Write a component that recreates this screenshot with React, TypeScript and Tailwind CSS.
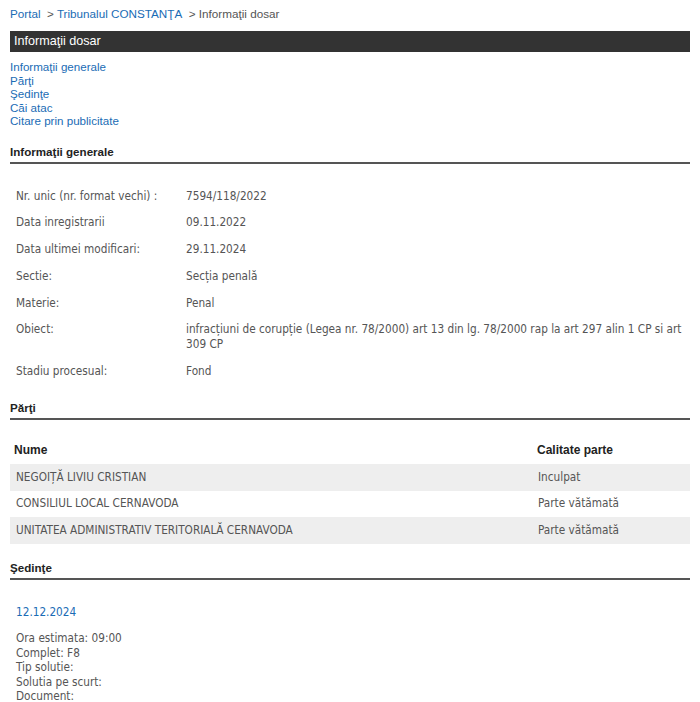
import React from "react";

const arial = { fontFamily: '"Liberation Sans", Arial, sans-serif' };
const body = { fontFamily: '"DejaVu Sans Condensed", "Open Sans", sans-serif' };

const info: [string, React.ReactNode][] = [
  ["Nr. unic (nr. format vechi) :", "7594/118/2022"],
  ["Data inregistrarii", "09.11.2022"],
  ["Data ultimei modificari:", "29.11.2024"],
  ["Sectie:", "Secția penală"],
  ["Materie:", "Penal"],
  [
    "Obiect:",
    "infracțiuni de corupție (Legea nr. 78/2000) art 13 din lg. 78/2000 rap la art 297 alin 1 CP si art 309 CP",
  ],
  ["Stadiu procesual:", "Fond"],
];

const parti = [
  ["NEGOIȚĂ LIVIU CRISTIAN", "Inculpat"],
  ["CONSILIUL LOCAL CERNAVODA", "Parte vătămată"],
  ["UNITATEA ADMINISTRATIV TERITORIALĂ CERNAVODA", "Parte vătămată"],
];

function Heading({ children, className = "" }: { children: React.ReactNode; className?: string }) {
  return (
    <div
      className={`border-b-2 border-[#555] pb-[3px] text-[11.6px] font-bold leading-[15px] text-[#222] ${className}`}
      style={arial}
    >
      {children}
    </div>
  );
}

export default function App() {
  return (
    <div className="min-h-[702px] w-[700px] bg-white px-[10px] pt-[6px]">
      <div className="text-[11.7px] leading-[15px] text-[#555]" style={arial}>
        <span className="text-[#1a6cb5]">Portal</span>
        <span>&nbsp; &gt; </span>
        <span className="text-[#1a6cb5]">Tribunalul CONSTANŢA</span>
        <span>&nbsp; &gt; Informaţii dosar</span>
      </div>
      <div
        className="mt-[10px] h-[21px] bg-[#333333] pl-[4px] text-[12.6px] leading-[21px] text-white"
        style={arial}
      >
        Informaţii dosar
      </div>
      <div className="mt-[8px] flex flex-col text-[11.6px] leading-[13.5px] text-[#1a6cb5]" style={arial}>
        <span>Informaţii generale</span>
        <span>Părţi</span>
        <span>Şedinţe</span>
        <span>Căi atac</span>
        <span>Citare prin publicitate</span>
      </div>

      <Heading className="mt-[16px]">Informaţii generale</Heading>
      <div className="mt-[25px] flex flex-col gap-[11.75px] pl-[6px] text-[11.7px] leading-[15px] text-[#555]" style={body}>
        {info.map(([k, v]) => (
          <div key={k} className="flex">
            <div className="w-[170px] shrink-0">{k}</div>
            <div className="flex-1 pr-[4px]">{v}</div>
          </div>
        ))}
      </div>

      <Heading className="mt-[21px]">Părţi</Heading>
      <div className="mt-[15px]" style={body}>
        <div className="flex h-[29px] items-center text-[12px] font-bold text-[#222]" style={arial}>
          <div className="flex-1 pl-[4px]">Nume</div>
          <div className="w-[153px]">Calitate parte</div>
        </div>
        {parti.map(([n, c], i) => (
          <div
            key={n}
            className={`flex h-[26.7px] items-center text-[11.7px] text-[#555] ${i % 2 === 0 ? "bg-[#eeeeee]" : ""}`}
          >
            <div className="flex-1 pl-[6px]">{n}</div>
            <div className="w-[153px] pl-[1px]">{c}</div>
          </div>
        ))}
      </div>

      <Heading className="mt-[16px]">Şedinţe</Heading>
      <div className="mt-[25px] pl-[6px] text-[11.7px] text-[#555]" style={body}>
        <div className="leading-[15px] text-[#1a6cb5]">12.12.2024</div>
        <div className="mt-[11px] flex flex-col leading-[14.5px]">
          <span>Ora estimata: 09:00</span>
          <span>Complet: F8</span>
          <span>Tip solutie:</span>
          <span>Solutia pe scurt:</span>
          <span>Document:</span>
        </div>
      </div>
    </div>
  );
}
